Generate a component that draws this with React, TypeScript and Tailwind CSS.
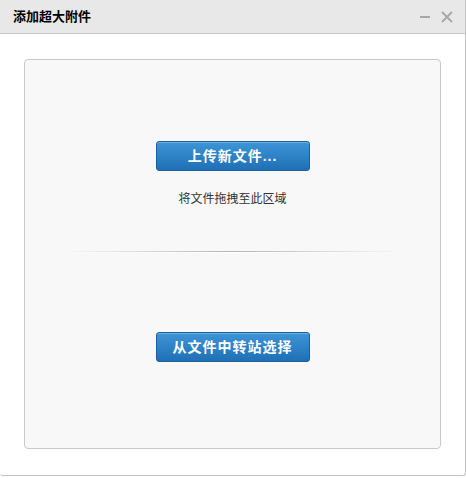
import React from 'react';

const FONT = { fontFamily: '"Liberation Sans", "Noto Sans CJK SC", sans-serif' };

const BlueButton: React.FC<{ label: string }> = ({ label }) => (
  <button
    className="w-[154px] h-[30px] rounded-[3px] border border-[#1d5f98] bg-gradient-to-b from-[#3d95d6] to-[#1f70b6] text-white text-[14px] font-bold tracking-[1px] shadow-[inset_0_1px_0_rgba(255,255,255,0.25)]"
    style={FONT}
  >
    {label}
  </button>
);

export default function App() {
  return (
    <div className="w-[466px] h-[476px] bg-white border-r border-b border-[#c4c4c4] rounded-br-[3px] rounded-bl-[3px] flex flex-col" style={FONT}>
      {/* title bar */}
      <div className="h-[35px] bg-[#e8e8e8] border-b border-[#c6c6c6] flex items-center justify-between pl-[13px] pr-[12px]">
        <span className="text-[13px] font-bold text-black">添加超大附件</span>
        <div className="flex items-center gap-[10px] text-[#a8a8a8]">
          <svg width="11" height="11" viewBox="0 0 11 11">
            <path d="M0 6h10" stroke="currentColor" strokeWidth="2" />
          </svg>
          <svg width="12" height="12" viewBox="0 0 12 12">
            <path d="M1 1l10 10M11 1L1 11" stroke="currentColor" strokeWidth="1.8" />
          </svg>
        </div>
      </div>

      <div className="flex-1 pt-[25px] pl-[24px] pr-[24px] pb-[26px]">
        <div className="h-[390px] rounded-[4px] border border-[#c9c9c9] bg-[#f8f8f8] flex flex-col items-center">
          <div className="mt-[81px]">
            <BlueButton label="上传新文件..." />
          </div>
          <div className="mt-[19px] text-[12px] text-[#333]">将文件拖拽至此区域</div>
          <div className="mt-[43px] w-[334px] flex flex-col">
            <div className="h-px bg-gradient-to-r from-transparent via-[#b4b4b4] to-transparent" />
            <div className="h-px bg-gradient-to-r from-transparent via-white to-transparent" />
          </div>
          <div className="mt-[79px]">
            <BlueButton label="从文件中转站选择" />
          </div>
        </div>
      </div>
    </div>
  );
}
